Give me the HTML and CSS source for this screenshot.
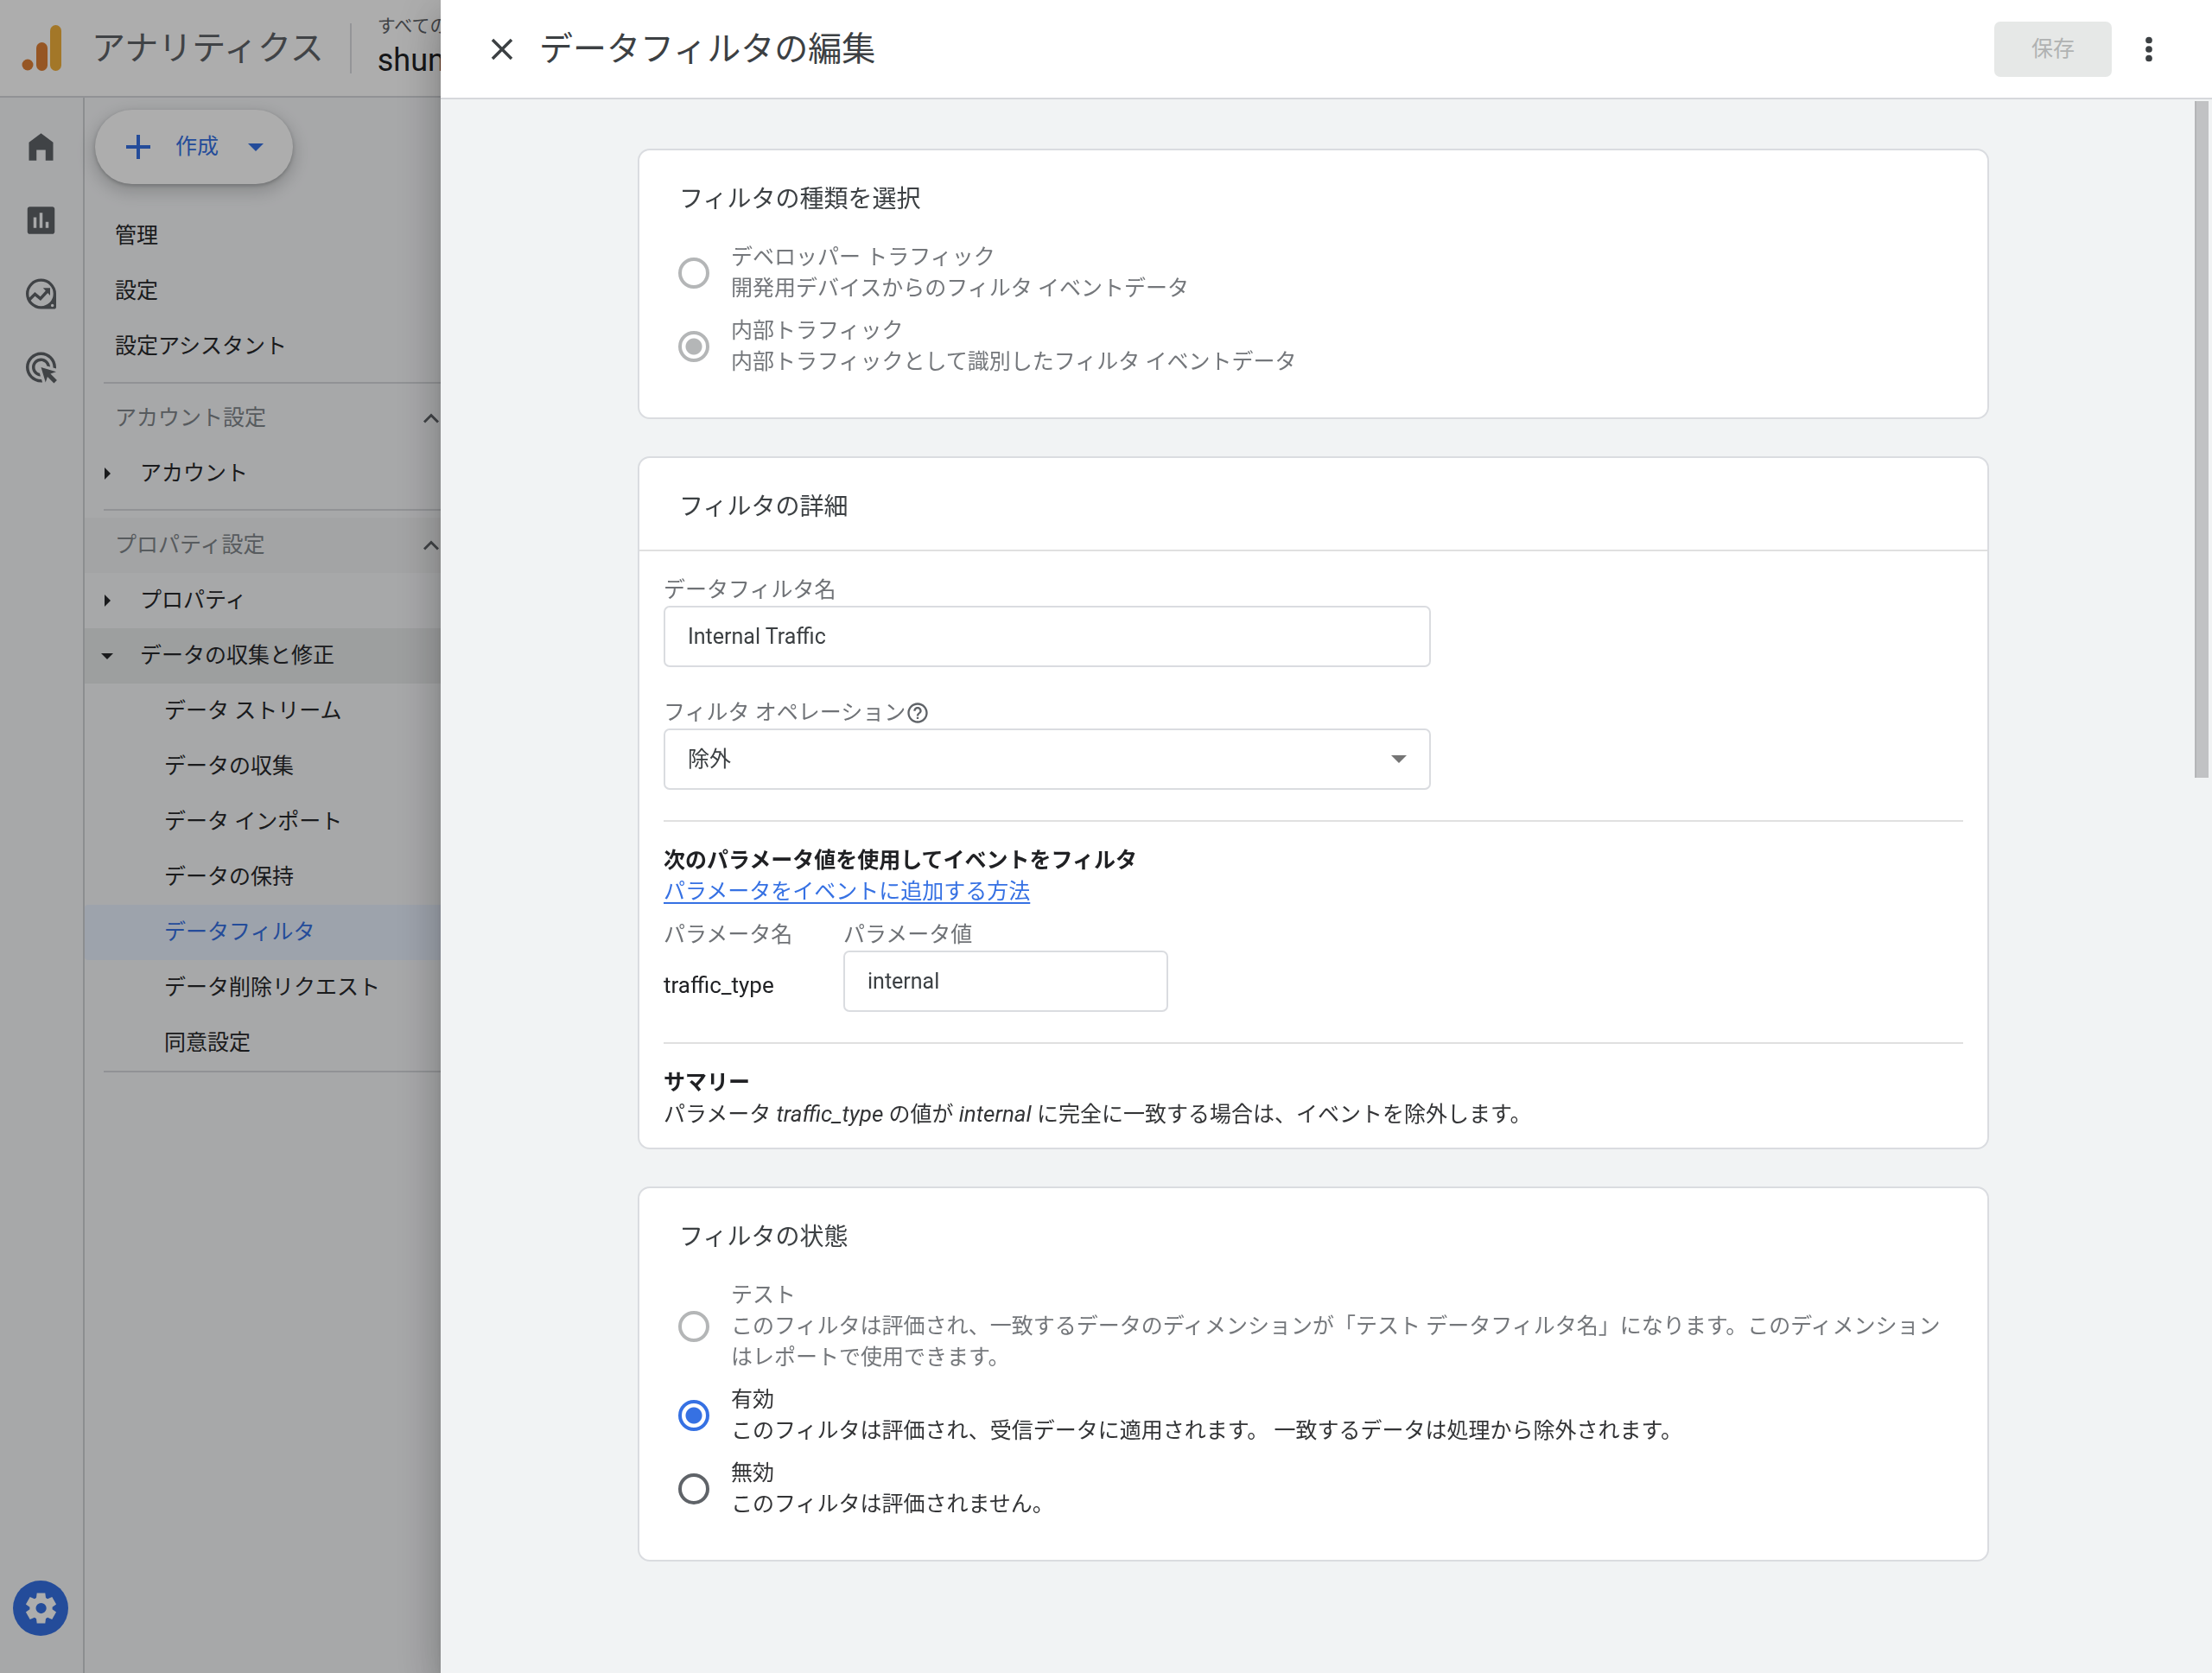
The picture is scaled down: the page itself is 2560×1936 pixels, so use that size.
FILE: index.html
```html
<!DOCTYPE html>
<html lang="ja">
<head>
    <meta charset="UTF-8">
    <meta name="viewport" content="width=device-width, initial-scale=1.0">
    <title>データフィルタの編集</title>
    <link rel="stylesheet" href="styles.css">
</head>
<body>
    <div class="app">
        <header class="app-header">
            <svg class="logo" viewBox="0 0 60 60">
                <circle cx="10" cy="49" r="6.5" fill="#dd7f35"/>
                <rect x="20" y="23" width="13" height="33" rx="6.5" fill="#dd7f35"/>
                <rect x="36" y="3" width="13" height="53" rx="6.5" fill="#f0b03c"/>
            </svg>
            <span class="app-name">アナリティクス</span>
            <div class="account">
                <span class="account-path">すべてのアカウント</span>
                <span class="account-name">shun</span>
            </div>
        </header>

        <div class="app-body">
            <nav class="rail">
                <a href="#" aria-label="ホーム"><svg viewBox="0 0 24 24"><path d="M4 21V9l8-6 8 6v12h-5v-7H9v7z"/></svg></a>
                <a href="#" aria-label="レポート"><svg viewBox="0 0 24 24"><path d="M19.500 3h-15C3.700 3 3 3.700 3 4.500v15c0 .8.7 1.500 1.500 1.500h15c.8 0 1.500-.7 1.500-1.500v-15c0-.8-.7-1.500-1.500-1.500zM9 17H7v-7h2v7zm4 0h-2V7h2v10zm4 0h-2v-4h2v4z"/></svg></a>
                <a href="#" aria-label="探索"><svg viewBox="0 0 24 24"><path fill-rule="evenodd" d="M12 2a10 10 0 0 0 0 20h8.500a1.500 1.500 0 0 0 1.500-1.500V12A10 10 0 0 0 12 2zm0 1.900a8.100 8.100 0 1 1 0 16.200 8.100 8.100 0 0 1 0-16.200zm7.500 14.800a1 1 0 1 1 0 2 1 1 0 0 1 0-2z"/><path fill="none" stroke="currentColor" stroke-width="2" d="M4 16.200l4-4 3.600 3 5.200-5.600"/><path d="M13.300 8.200H18v4.900z"/></svg></a>
                <a href="#" aria-label="広告"><svg viewBox="0 0 24 24"><path d="M11.710 17.990C8.530 17.840 6 15.220 6 12c0-3.310 2.690-6 6-6 3.220 0 5.840 2.530 5.990 5.710l-2.100-.63C15.480 9.310 13.890 8 12 8c-2.210 0-4 1.790-4 4 0 1.890 1.310 3.480 3.080 3.890l.63 2.100zM22 12c0 .3-.01.6-.04.9l-1.970-.59c.01-.1.01-.21.01-.31 0-4.420-3.580-8-8-8s-8 3.580-8 8 3.580 8 8 8c.1 0 .21 0 .31-.01l.59 1.970c-.3.030-.6.040-.9.040C6.480 22 2 17.520 2 12S6.480 2 12 2s10 4.480 10 10zm-3.770 4.260L22 15l-10-3 3 10 1.260-3.770 4.270 4.270 1.980-1.980-4.280-4.260z"/></svg></a>
                <a href="#" class="rail-admin" aria-label="管理"><svg viewBox="0 0 24 24"><path d="m9.250 22-.4-3.200q-.325-.125-.612-.3-.288-.175-.563-.375L4.700 19.375l-2.750-4.750 2.575-1.950Q4.500 12.500 4.500 12.337v-.675q0-.162.025-.337L1.950 9.375l2.750-4.750 2.975 1.250q.275-.2.575-.375.3-.175.6-.3l.4-3.200h5.500l.4 3.200q.325.125.613.3.287.175.562.375l2.975-1.250 2.750 4.750-2.575 1.950q.025.175.025.337v.675q0 .163-.05.338l2.575 1.950-2.750 4.750-2.950-1.250q-.275.2-.575.375-.3.175-.6.3l-.4 3.200Zm2.800-6.500q1.450 0 2.475-1.025Q15.550 13.450 15.550 12q0-1.450-1.025-2.475Q13.500 8.500 12.050 8.500q-1.475 0-2.488 1.025Q8.550 10.550 8.550 12q0 1.450 1.012 2.475Q10.575 15.500 12.050 15.500Z"/></svg></a>
            </nav>

            <nav class="menu">
                <button type="button" class="create-btn">
                    <svg class="plus" viewBox="0 0 28 28"><path d="M12 0h4v12h12v4H16v12h-4V16H0v-4h12z"/></svg>
                    <span>作成</span>
                    <i class="caret"></i>
                </button>

                <a href="#" class="item">管理</a>
                <a href="#" class="item">設定</a>
                <a href="#" class="item">設定アシスタント</a>
                <hr>
                <a href="#" class="item section">アカウント設定
                    <svg class="chevron" viewBox="0 0 18 12"><path d="M1 10.500l8-8 8 8"/></svg></a>
                <a href="#" class="item group"><i class="arrow-right"></i>アカウント</a>
                <hr>
                <a href="#" class="item section hovered">プロパティ設定
                    <svg class="chevron" viewBox="0 0 18 12"><path d="M1 10.500l8-8 8 8"/></svg></a>
                <a href="#" class="item group"><i class="arrow-right"></i>プロパティ</a>
                <a href="#" class="item group open"><i class="arrow-down"></i>データの収集と修正</a>
                <a href="#" class="item sub">データ ストリーム</a>
                <a href="#" class="item sub">データの収集</a>
                <a href="#" class="item sub">データ インポート</a>
                <a href="#" class="item sub">データの保持</a>
                <a href="#" class="item sub selected">データフィルタ</a>
                <a href="#" class="item sub">データ削除リクエスト</a>
                <a href="#" class="item sub">同意設定</a>
                <hr class="last">
            </nav>
        </div>
    </div>

    <div class="backdrop"></div>

    <section class="drawer">
        <header class="drawer-header">
            <button type="button" class="icon-btn" aria-label="閉じる">
                <svg viewBox="0 0 24 24"><path d="M19 6.410L17.590 5 12 10.590 6.410 5 5 6.410 10.590 12 5 17.590 6.410 19 12 13.410 17.590 19 19 17.590 13.410 12z"/></svg>
            </button>
            <h1>データフィルタの編集</h1>
            <button type="button" class="save-btn" disabled>保存</button>
            <button type="button" class="icon-btn" aria-label="その他">
                <svg viewBox="0 0 24 24"><circle cx="12" cy="6" r="2.200"/><circle cx="12" cy="12" r="2.200"/><circle cx="12" cy="18" r="2.200"/></svg>
            </button>
        </header>

        <form class="drawer-body">
            <div class="card">
                <h2>フィルタの種類を選択</h2>
                <div class="options">
                    <label class="option disabled">
                        <input type="radio" name="type" disabled>
                        <span>デベロッパー トラフィック<br>開発用デバイスからのフィルタ イベントデータ</span>
                    </label>
                    <label class="option disabled">
                        <input type="radio" name="type" checked disabled>
                        <span>内部トラフィック<br>内部トラフィックとして識別したフィルタ イベントデータ</span>
                    </label>
                </div>
            </div>

            <div class="card">
                <h2>フィルタの詳細</h2>
                <div class="details">
                    <div class="field">
                        <label for="filterName">データフィルタ名</label>
                        <input type="text" id="filterName" value="Internal Traffic">
                    </div>
                    <div class="field">
                        <label for="operation">フィルタ オペレーション<svg class="help" viewBox="0 0 24 24"><path d="M11 18h2v-2h-2v2zm1-16C6.480 2 2 6.480 2 12s4.480 10 10 10 10-4.480 10-10S17.520 2 12 2zm0 18c-4.410 0-8-3.590-8-8s3.590-8 8-8 8 3.590 8 8-3.590 8-8 8zm0-14c-2.210 0-4 1.790-4 4h2c0-1.100.9-2 2-2s2 .9 2 2c0 2-3 1.750-3 5h2c0-2.250 3-2.500 3-5 0-2.210-1.790-4-4-4z"/></svg></label>
                        <div class="select">
                            <select id="operation">
                                <option>除外</option>
                            </select>
                        </div>
                    </div>

                    <div class="block">
                        <h3>次のパラメータ値を使用してイベントをフィルタ</h3>
                        <a href="#">パラメータをイベントに追加する方法</a>
                        <div class="params">
                            <div class="param-name">
                                <span class="caption">パラメータ名</span>
                                <span class="value">traffic_type</span>
                            </div>
                            <div class="param-value">
                                <label for="paramValue">パラメータ値</label>
                                <input type="text" id="paramValue" value="internal">
                            </div>
                        </div>
                    </div>

                    <div class="block">
                        <h3>サマリー</h3>
                        <p>パラメータ <em>traffic_type</em> の値が <em>internal</em> に完全に一致する場合は、イベントを除外します。</p>
                    </div>
                </div>
            </div>

            <div class="card">
                <h2>フィルタの状態</h2>
                <div class="options">
                    <label class="option disabled">
                        <input type="radio" name="state" disabled>
                        <span>テスト<br>このフィルタは評価され、一致するデータのディメンションが「テスト データフィルタ名」になります。このディメンションはレポートで使用できます。</span>
                    </label>
                    <label class="option">
                        <input type="radio" name="state" checked>
                        <span>有効<br>このフィルタは評価され、受信データに適用されます。 一致するデータは処理から除外されます。</span>
                    </label>
                    <label class="option">
                        <input type="radio" name="state">
                        <span>無効<br>このフィルタは評価されません。</span>
                    </label>
                </div>
            </div>

            <div class="scroll-thumb"></div>
        </form>
    </section>
</body>
</html>
```

FILE: styles.css
```css
* {
    box-sizing: border-box;
}

body {
    margin: 0;
    font-family: Roboto, "Noto Sans CJK JP", sans-serif;
    font-size: 25px;
    line-height: 36px;
    color: #333436;
}

h1, h2, h3, p {
    margin: 0;
    font-weight: 400;
}

button, input, select {
    font: inherit;
    color: inherit;
}

/* page behind the drawer */
.app {
    display: flex;
    flex-direction: column;
    min-height: 100vh;
    overflow: hidden;
    background-color: #f7f8fa;
}

.app-header {
    display: flex;
    align-items: center;
    height: 113px;
    padding-left: 22px;
    background-color: #fff;
    border-bottom: 2px solid #d6d8dc;
    white-space: nowrap;
}

.logo {
    width: 60px;
    height: 60px;
}

.app-name {
    margin: 0 30px 0 24px;
    font-size: 39px;
    color: #5f6368;
}

.account {
    display: flex;
    flex-direction: column;
    height: 58px;
    padding: 0 0 8px 30px;
    border-left: 2px solid #dadce0;
    justify-content: center;
}

.account-path {
    font-size: 21px;
    color: #5f6368;
}

.account-name {
    font-size: 36px;
    line-height: 44px;
    color: #202124;
}

.app-body {
    display: flex;
    flex: 1;
}

.rail {
    display: flex;
    flex-direction: column;
    align-items: center;
    gap: 43px;
    width: 98px;
    padding: 36px 2px 43px 0;
    border-right: 2px solid #cfd1d4;
}

.rail a {
    display: flex;
    color: #5f6368;
}

.rail svg {
    width: 43px;
    height: 42px;
    fill: currentColor;
}

.rail .rail-admin {
    align-items: center;
    justify-content: center;
    width: 64px;
    height: 64px;
    margin-top: auto;
    border-radius: 50%;
    background-color: #3671e3;
    color: #fff;
}

.menu {
    width: 416px;
    padding-top: 14px;
}

.create-btn {
    display: flex;
    align-items: center;
    width: 229px;
    height: 86px;
    margin: 0 0 28px 12px;
    padding: 0 34px 0 36px;
    border: none;
    border-radius: 43px;
    background-color: #fff;
    box-shadow: 0 2px 4px rgba(60, 64, 67, 0.3), 0 7px 18px 4px rgba(60, 64, 67, 0.2);
    color: #3671e3;
}

.plus {
    width: 28px;
    height: 28px;
    margin-right: 29px;
    fill: currentColor;
}

.caret {
    margin-left: auto;
    border: 9px solid transparent;
    border-top-color: currentColor;
    border-bottom: none;
}

.menu hr {
    margin: 9px 0 8px 22px;
    border: none;
    border-top: 2px solid #d6d8dc;
}

.menu hr.last {
    margin-top: 0;
}

.item {
    display: flex;
    align-items: center;
    height: 64px;
    padding-left: 35px;
    color: #27282b;
    text-decoration: none;
}

.section {
    color: #80868b;
}

.hovered {
    background-color: #f1f2f3;
}

.chevron {
    width: 18px;
    height: 12px;
    margin: 0 6px 0 auto;
    fill: none;
    stroke: #5f6368;
    stroke-width: 3;
}

.group {
    padding-left: 19px;
}

.open {
    background-color: #e8eaeb;
}

.arrow-right,
.arrow-down {
    width: 14px;
    margin-right: 31px;
    border: 7px solid transparent;
}

.arrow-right {
    border-left-color: currentColor;
    border-right: none;
    width: 7px;
    margin-left: 4px;
    margin-right: 34px;
}

.arrow-down {
    border-top-color: currentColor;
    border-bottom: none;
}

.sub {
    padding-left: 92px;
}

.selected {
    background-color: #e8f0fe;
    border-radius: 4px;
    color: #3671e3;
}

.backdrop {
    position: fixed;
    inset: 0;
    background-color: rgba(0, 0, 0, 0.32);
}

/* drawer */
.drawer {
    position: fixed;
    top: 0;
    right: 0;
    bottom: 0;
    left: 510px;
    display: flex;
    flex-direction: column;
    background-color: #f1f3f4;
    box-shadow: 0 14px 18px -9px rgba(0, 0, 0, 0.2), 0 28px 43px 4px rgba(0, 0, 0, 0.14), 0 11px 53px 9px rgba(0, 0, 0, 0.12);
}

.drawer-header {
    display: flex;
    align-items: center;
    gap: 22px;
    height: 115px;
    padding: 0 52px 0 50px;
    background-color: #fff;
    border-bottom: 2px solid #d6d8dc;
}

.drawer-header h1 {
    flex: 1;
    font-size: 39px;
    color: #3c4043;
}

.icon-btn {
    display: flex;
    padding: 0;
    border: none;
    background: none;
    color: #3c4043;
}

.icon-btn svg {
    width: 42px;
    height: 42px;
    fill: currentColor;
}

.save-btn {
    width: 136px;
    height: 64px;
    border: none;
    border-radius: 7px;
    background-color: #e6e8e7;
    color: #b0b2b2;
}

.drawer-body {
    position: relative;
    flex: 1;
    overflow-y: auto;
    padding: 57px 30px 57px 0;
}

.card {
    max-width: 1564px;
    margin: 0 auto 43px;
    background-color: #fff;
    border: 2px solid #dadce0;
    border-radius: 14px;
}

.card h2 {
    padding: 39px 46px 31px;
    font-size: 28px;
    color: #3c4043;
}

.options {
    display: flex;
    flex-direction: column;
    gap: 13px;
    padding: 0 45px 46px;
}

.option {
    display: flex;
    align-items: center;
    gap: 25px;
}

.option.disabled {
    color: #74777b;
}

.option input {
    flex: none;
    appearance: none;
    width: 36px;
    height: 36px;
    margin: 0;
    border: 4px solid #5f6368;
    border-radius: 50%;
}

.option input:checked {
    border-color: #3671e3;
    background: radial-gradient(#3671e3 9px, transparent 10px);
}

.option input:disabled {
    border-color: #b4b6b7;
}

.option input:checked:disabled {
    background: radial-gradient(#b4b6b7 9px, transparent 10px);
}

.details {
    padding: 27px 28px 20px;
    border-top: 2px solid #e0e0e0;
}

.field {
    max-width: 888px;
    margin-bottom: 35px;
}

.details label,
.caption {
    display: flex;
    align-items: center;
    color: #6f7276;
}

.help {
    width: 28px;
    height: 28px;
    fill: #5f6368;
}

input[type="text"],
select {
    display: block;
    width: 100%;
    height: 71px;
    padding: 0 26px;
    border: 2px solid #dadce0;
    border-radius: 7px;
    background-color: #fff;
    color: #3c4043;
}

select {
    appearance: none;
}

.select {
    position: relative;
}

.select::after {
    content: "";
    position: absolute;
    top: 31px;
    right: 28px;
    border: 9px solid transparent;
    border-top-color: #757575;
    border-bottom: none;
}

.block {
    margin-top: 35px;
    padding-top: 27px;
    border-top: 2px solid #e0e0e0;
}

.block h3 {
    font-size: 25px;
    font-weight: 700;
    color: #202124;
}

.block a {
    color: #3671e3;
    text-underline-offset: 4px;
}

.block em {
    font-size: 26px;
}

.params {
    display: flex;
    margin-top: 14px;
}

.param-name {
    width: 208px;
}

.param-value {
    width: 376px;
}

.param-name .value {
    display: block;
    padding-top: 22px;
    font-size: 26px;
    color: #202124;
}

.scroll-thumb {
    position: absolute;
    top: 2px;
    right: 4px;
    width: 16px;
    height: 43%;
    background-color: #c1c2c4;
    border-left: 2px solid #b4b5b7;
}
```
